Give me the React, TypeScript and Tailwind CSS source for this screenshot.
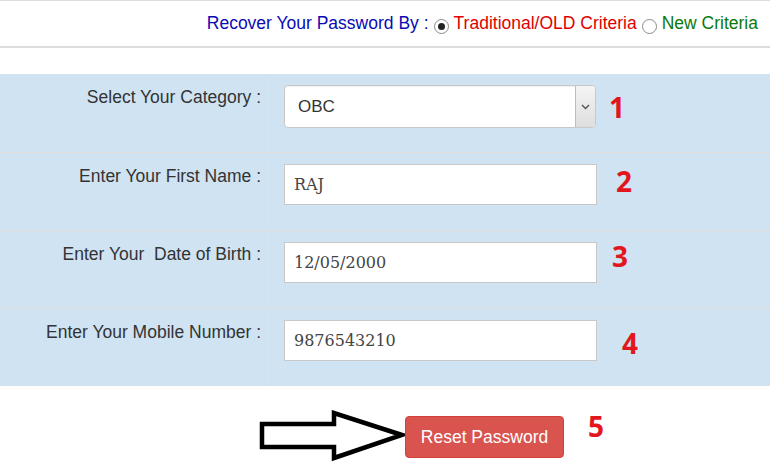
import React from 'react';

type Row = {
  label: string;
  value: string;
  select?: boolean;
  num: string;
  numClass: string;
};

const rows: Row[] = [
  { label: 'Select Your Category :', value: 'OBC', select: true, num: '1', numClass: 'ml-[13px] mt-[8px]' },
  { label: 'Enter Your First Name :', value: 'RAJ', num: '2', numClass: 'ml-[19px] mt-[3px]' },
  { label: 'Enter Your \u00a0Date of Birth :', value: '12/05/2000', num: '3', numClass: 'ml-[15px] mt-[0px]' },
  { label: 'Enter Your Mobile Number :', value: '9876543210', num: '4', numClass: 'ml-[25px] mt-[9px]' },
];

function Radio({ checked }: { checked?: boolean }) {
  return (
    <span className="mx-[5px] mt-[6px] inline-flex h-[15px] w-[15px] items-center justify-center rounded-full border border-[#8a8a8a] bg-white">
      {checked && <span className="h-[7px] w-[7px] rounded-full bg-[#222]" />}
    </span>
  );
}

function Field({ row }: { row: Row }) {
  if (row.select) {
    return (
      <div className="flex h-[43px] w-[312px] overflow-hidden rounded-[4px] border border-[#c8c8c8] bg-white shadow-[inset_0_1px_1px_rgba(0,0,0,0.06)]">
        <div className="flex flex-1 items-center pl-[13px] font-['Liberation_Sans',Arial,sans-serif] text-[17px] text-[#333]">
          {row.value}
        </div>
        <div className="flex w-[20px] items-center justify-center border-l border-[#bdbdbd] bg-gradient-to-b from-[#f4f4f4] to-[#dedede]">
          <svg width="9" height="6" viewBox="0 0 9 6">
            <path d="M1 1 L4.5 4.5 L8 1" fill="none" stroke="#555" strokeWidth="1.4" />
          </svg>
        </div>
      </div>
    );
  }
  return (
    <div className="flex h-[41px] w-[313px] items-center border border-[#c8c8c8] bg-white pl-[9px] font-['DejaVu_Serif',serif] text-[16px] text-[#444]">
      {row.value}
    </div>
  );
}

export default function App() {
  return (
    <div className="h-[462px] w-[770px] overflow-hidden bg-white font-['Liberation_Sans',Arial,sans-serif]">
      <div className="flex h-[48px] items-center justify-end border-t border-b-2 border-[#dddddd] pr-[12px] text-[17.5px]">
        <span className="text-[#0a0ab4]">Recover Your Password By :</span>
        <Radio checked />
        <span className="text-[#e00000]">Traditional/OLD Criteria</span>
        <Radio />
        <span className="text-[#0b7a0b]">New Criteria</span>
      </div>

      <div className="h-[26px]" />

      <div className="bg-[#cfe3f3]">
        {rows.map((row, i) => (
          <div key={row.num} className={`flex h-[78px] ${i > 0 ? 'border-t border-[#dfdcdc]' : ''}`}>
            <div className="w-[272px] border-r border-[#dfdcdc] pr-[10px] pt-[10px] text-right text-[17.5px] text-[#333]">
              {row.label}
            </div>
            <div className="flex flex-1 items-start pl-[12px] pt-[11px]">
              <Field row={row} />
              <span className={`font-['Open_Sans',sans-serif] text-[28px] font-bold leading-none text-[#e3161e] ${row.numClass}`}>
                {row.num}
              </span>
            </div>
          </div>
        ))}
      </div>

      <div className="flex items-start pl-[258px] pt-[24px]">
        <svg width="147" height="52" viewBox="0 0 147 52">
          <path
            d="M4 14 L76 14 L76 3 L144 25 L76 48 L76 37 L4 37 Z"
            fill="white"
            stroke="black"
            strokeWidth="4.5"
            strokeLinejoin="miter"
          />
        </svg>
        <button className="mt-[6px] h-[42px] w-[159px] rounded-[4px] border border-[#d43f3a] bg-[#d9534f] text-[17.5px] text-white">
          Reset Password
        </button>
        <span className="ml-[24px] mt-[2px] font-['Open_Sans',sans-serif] text-[28px] font-bold leading-none text-[#e3161e]">
          5
        </span>
      </div>
    </div>
  );
}
